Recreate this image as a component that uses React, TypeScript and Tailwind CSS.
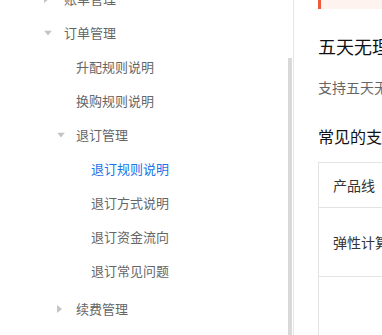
const FONT = { fontFamily: '"Noto Sans CJK SC", "Noto Sans", sans-serif' };

type Item = {
  label: string;
  indent: string;
  caret?: "down" | "right";
  caretX?: string;
  active?: boolean;
  extra?: string;
};

const ITEMS: Item[] = [
  { label: "账单管理", indent: "pl-[64px]", caret: "right", caretX: "left-[44px]" },
  { label: "订单管理", indent: "pl-[64px]", caret: "down", caretX: "left-[44px]" },
  { label: "升配规则说明", indent: "pl-[76px]" },
  { label: "换购规则说明", indent: "pl-[76px]" },
  { label: "退订管理", indent: "pl-[76px]", caret: "down", caretX: "left-[57px]" },
  { label: "退订规则说明", indent: "pl-[91px]", active: true },
  { label: "退订方式说明", indent: "pl-[91px]" },
  { label: "退订资金流向", indent: "pl-[91px]" },
  { label: "退订常见问题", indent: "pl-[91px]" },
  { label: "续费管理", indent: "pl-[76px]", caret: "right", caretX: "left-[57px]", extra: "mt-[4px]" },
];

function Caret({ dir }: { dir: "down" | "right" }) {
  if (dir === "down")
    return (
      <svg width="8" height="5" viewBox="0 0 8 5">
        <path d="M0 0h8L4 5z" fill="#c4c4c4" />
      </svg>
    );
  return (
    <svg width="5" height="8" viewBox="0 0 5 8">
      <path d="M0 0l5 4-5 4z" fill="#c4c4c4" />
    </svg>
  );
}

export default function App() {
  return (
    <div className="flex h-[335px] w-[382px] overflow-hidden bg-white" style={FONT}>
      <aside className="relative w-[294px] shrink-0 border-r border-[#e6e6e6]">
        <ul className="-mt-[18px]">
          {ITEMS.map((it) => (
            <li
              key={it.label}
              className={`relative flex h-[34px] items-center text-[13px] ${it.indent} ${it.extra ?? ""} ${
                it.active ? "text-[#1a73e8]" : "text-[#666666]"
              }`}
            >
              {it.caret && (
                <span className={`absolute ${it.caretX} top-1/2 flex -translate-y-1/2 items-center`}>
                  <Caret dir={it.caret} />
                </span>
              )}
              {it.label}
            </li>
          ))}
        </ul>
        <div className="absolute right-[1px] top-[58px] bottom-0 w-[4px] bg-[#d9d9d9]" />
      </aside>

      <main className="min-w-0 flex-1 pl-[24px]">
        <div className="flex h-[9px] w-[400px]">
          <div className="w-[3px] bg-[#f05a3c]" />
          <div className="flex-1 bg-[#fff3f0]" />
        </div>
        <h1 className="mt-[23px] whitespace-nowrap text-[18px] leading-[28px] text-[#111111]">
          五天无理由退订说明
        </h1>
        <p className="mt-[16px] whitespace-nowrap text-[14px] leading-[22px] text-[#666666]">
          支持五天无理由退订的产品
        </p>
        <h2 className="mt-[26px] whitespace-nowrap text-[16px] leading-[24px] text-[#111111]">
          常见的支持五天无理由退订的产品
        </h2>
        <table className="mt-[14px] w-[400px] border-collapse text-[14px] text-[#333333]">
          <tbody>
            <tr className="h-[45px]">
              <td className="whitespace-nowrap border border-[#e3e3e3] pl-[14px] align-middle">产品线</td>
            </tr>
            <tr className="h-[69px]">
              <td className="whitespace-nowrap border border-[#e3e3e3] pl-[14px] align-middle">弹性计算</td>
            </tr>
            <tr className="h-[80px]">
              <td className="border border-[#e3e3e3] pl-[14px]"></td>
            </tr>
          </tbody>
        </table>
      </main>
    </div>
  );
}
